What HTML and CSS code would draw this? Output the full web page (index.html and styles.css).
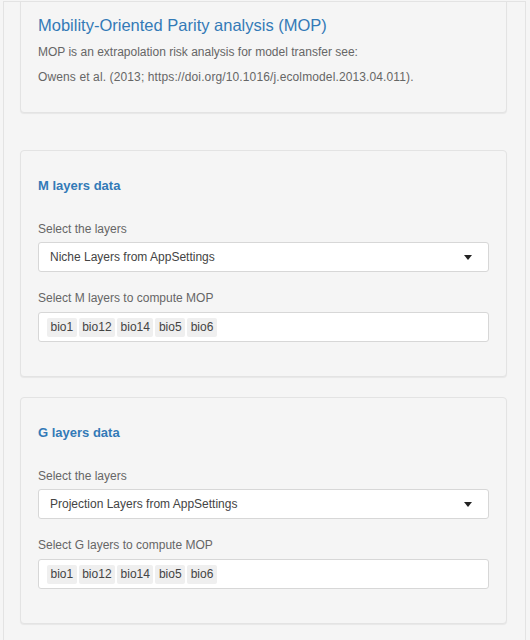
FILE: index.html
```html
<!DOCTYPE html>
<html>
<head>
<meta charset="utf-8">
<link rel="stylesheet" href="styles.css">
</head>
<body>
<div class="frame">
  <div class="panel">
    <div class="scroll">
      <div class="well intro">
        <h4 class="title">Mobility-Oriented Parity analysis (MOP)</h4>
        <p>MOP is an extrapolation risk analysis for model transfer see:</p>
        <p class="ref">Owens et al. (2013; https://doi.org/10.1016/j.ecolmodel.2013.04.011).</p>
      </div>
      <div class="spacer"></div>
      <div class="well">
        <h5 class="section">M layers data</h5>
        <div class="field">
          <label class="lbl">Select the layers</label>
          <div class="select">
            <span>Niche Layers from AppSettings</span>
            <span class="caret"></span>
          </div>
        </div>
        <div class="field last">
          <label class="lbl">Select M layers to compute MOP</label>
          <div class="multi">
            <span class="tag">bio1</span><span class="tag">bio12</span><span class="tag">bio14</span><span class="tag">bio5</span><span class="tag">bio6</span>
          </div>
        </div>
      </div>
      <div class="well">
        <h5 class="section">G layers data</h5>
        <div class="field">
          <label class="lbl">Select the layers</label>
          <div class="select">
            <span>Projection Layers from AppSettings</span>
            <span class="caret"></span>
          </div>
        </div>
        <div class="field last">
          <label class="lbl">Select G layers to compute MOP</label>
          <div class="multi">
            <span class="tag">bio1</span><span class="tag">bio12</span><span class="tag">bio14</span><span class="tag">bio5</span><span class="tag">bio6</span>
          </div>
        </div>
      </div>
    </div>
  </div>
</div>
</body>
</html>
```
FILE: styles.css
```css
html, body {
  margin: 0;
  padding: 0;
  background: #f5f5f5;
  height: 100%;
  overflow: hidden;
}
body {
  font-family: "Liberation Sans", Arial, sans-serif;
  font-size: 12px;
  color: #555;
}
.frame {
  padding: 1px 4px 0 3px;
  height: 640px;
  box-sizing: border-box;
}
.panel {
  height: 100%;
  border: 1px solid #e3e3e3;
  border-bottom: none;
  background: #f5f5f5;
  overflow: hidden;
  box-sizing: border-box;
}
.scroll {
  padding: 0 18px 0 16px;
  margin-top: -17px;
}
.well {
  background: #f5f5f5;
  border: 1px solid #e3e3e3;
  border-radius: 4px;
  box-shadow: 0 1px 1px rgba(0, 0, 0, 0.06);
  padding: 19px 17px;
  margin-bottom: 20px;
}
.spacer {
  height: 17px;
}
.title {
  margin: 10px 0 8px;
  font-size: 16.5px;
  line-height: 20px;
  font-weight: normal;
  color: #337ab7;
}
.intro p {
  margin: 0 0 7px;
  line-height: 18px;
  color: #666;
}
.intro p.ref {
  letter-spacing: 0.12px;
}
.section {
  margin: 7px 0 25px;
  font-size: 13px;
  line-height: 18px;
  font-weight: bold;
  color: #337ab7;
}
.field {
  margin-bottom: 17px;
}
.field.last {
  margin-bottom: 15px;
}
.lbl {
  display: block;
  line-height: 18px;
  margin-bottom: 4px;
  color: #666;
}
.field.last .lbl {
  margin-bottom: 5px;
}
.select {
  height: 30px;
  box-sizing: border-box;
  background: #fff;
  border: 1px solid #d7d7d7;
  border-radius: 3px;
  display: flex;
  align-items: center;
  justify-content: space-between;
  padding: 0 16px 0 11px;
  color: #444;
}
.caret {
  width: 0;
  height: 0;
  border-left: 4.5px solid transparent;
  border-right: 4.5px solid transparent;
  border-top: 5px solid #222;
}
.multi {
  height: 30px;
  box-sizing: border-box;
  background: #fff;
  border: 1px solid #d7d7d7;
  border-radius: 3px;
  display: flex;
  align-items: center;
  gap: 2px;
  padding: 0 8px;
}
.tag {
  background: #efefef;
  border-radius: 2px;
  padding: 0 3.5px;
  line-height: 19px;
  color: #444;
}
```
